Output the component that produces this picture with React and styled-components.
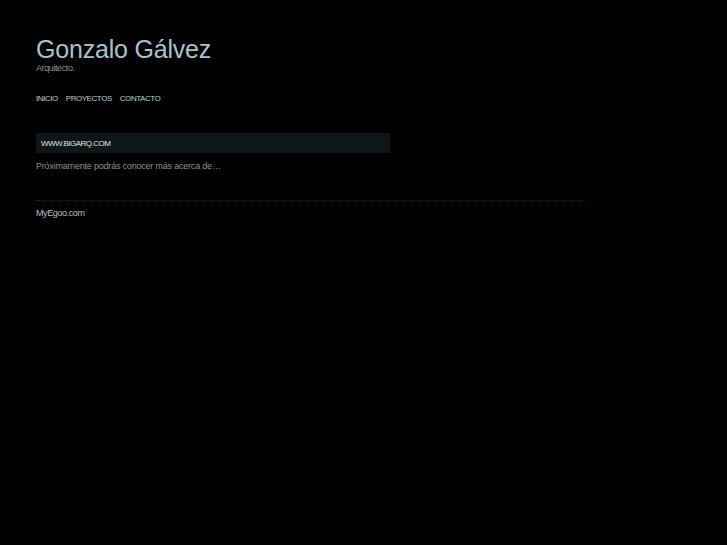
import React from "react";
import styled, { createGlobalStyle } from "styled-components";

const Global = createGlobalStyle`
  html, body { margin: 0; padding: 0; background: #000; }
  body { font-family: "Liberation Sans", Arial, sans-serif; color: #9a9a9a; }
`;

const Page = styled.div`
  width: 550px;
  padding: 36px 0 0 36px;
  display: flex;
  flex-direction: column;
`;

const Title = styled.h1`
  margin: 0;
  font-size: 25px;
  font-weight: normal;
  line-height: 26px;
  color: #a9c3cb;
  letter-spacing: -0.2px;
`;

const Tagline = styled.div`
  font-size: 9px;
  line-height: 12px;
  color: #8b9599;
  letter-spacing: -0.4px;
`;

const Nav = styled.nav`
  display: flex;
  gap: 8px;
  margin-top: 19px;
`;

const NavLink = styled.a`
  font-size: 8px;
  line-height: 12px;
  color: #b9cdd3;
  text-transform: uppercase;
  letter-spacing: -0.45px;
  text-decoration: none;
`;

const Post = styled.section`
  width: 354px;
  margin-top: 28px;
`;

const PostHead = styled.h2`
  margin: 0;
  height: 20px;
  display: flex;
  align-items: center;
  padding: 0 5px;
  background: #0f161a;
  font-size: 8px;
  font-weight: normal;
  color: #e0e0e0;
  letter-spacing: -0.5px;
`;

const PostBody = styled.p`
  margin: 7px 0 0;
  font-size: 9px;
  line-height: 12px;
  color: #8e8e8e;
  letter-spacing: -0.2px;
`;

const Footer = styled.footer`
  margin-top: 28px;
  border-top: 1px dotted #262626;
  padding-top: 1px;
`;

const FooterLink = styled.a`
  font-size: 9px;
  line-height: 12px;
  color: #a9c3cb;
  letter-spacing: -0.4px;
  text-decoration: none;
`;

export default function App() {
  return (
    <>
      <Global />
      <Page>
        <Title>Gonzalo Gálvez</Title>
        <Tagline>Arquitecto.</Tagline>
        <Nav>
          <NavLink href="#">Inicio</NavLink>
          <NavLink href="#">Proyectos</NavLink>
          <NavLink href="#">Contacto</NavLink>
        </Nav>
        <Post>
          <PostHead>WWW.BIGARQ.COM</PostHead>
          <PostBody>Próximamente podrás conocer más acerca de…</PostBody>
        </Post>
        <Footer>
          <FooterLink href="#">MyEgoo.com</FooterLink>
        </Footer>
      </Page>
    </>
  );
}
